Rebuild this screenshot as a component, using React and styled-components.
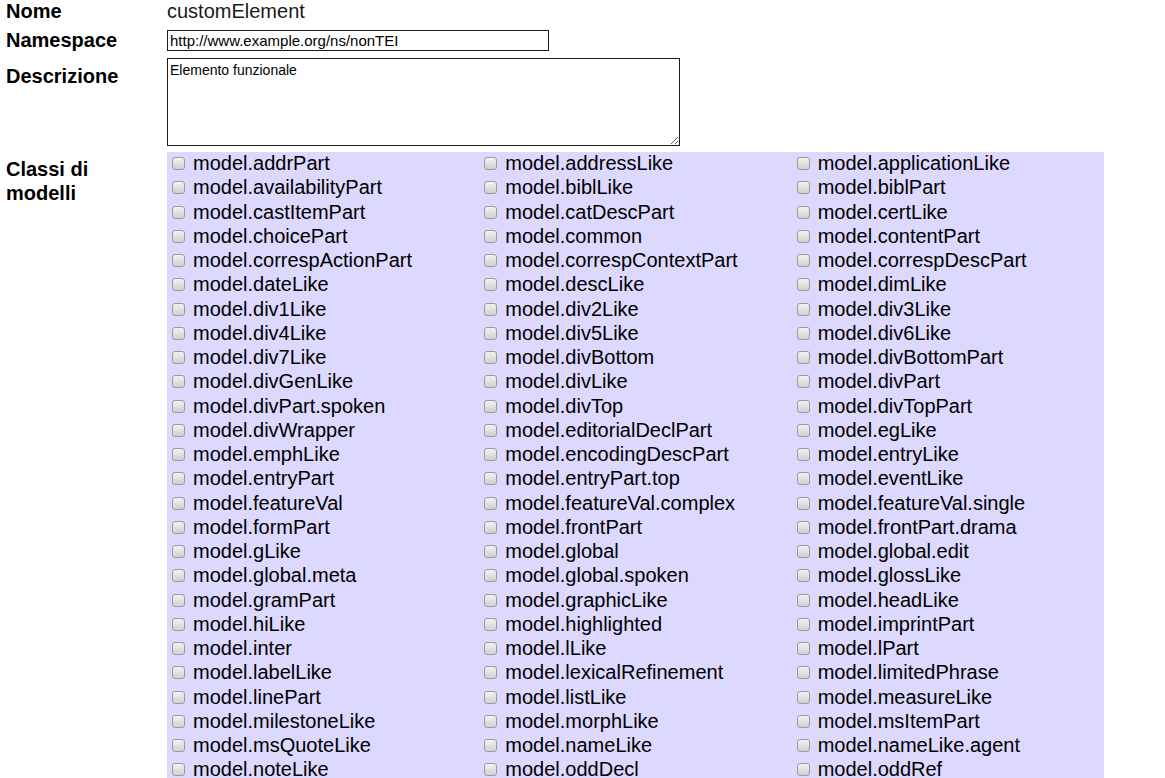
import React from "react";
import styled, { createGlobalStyle } from "styled-components";

const Global = createGlobalStyle`
  html, body { margin: 0; padding: 0; background: #fff; overflow: hidden; }
  body { font-family: "Liberation Sans", Arial, Helvetica, sans-serif; color: #000; }
`;

const Page = styled.div`
  padding: 0 0 0 6px;
  display: flex;
  flex-direction: column;
`;

const Row = styled.div`
  display: grid;
  grid-template-columns: 161px 937px;
  align-items: start;
  margin-bottom: ${(p) => p.$gap}px;
`;

const Label = styled.div`
  font-weight: bold;
  font-size: 20px;
  line-height: 24px;
  padding-right: 24px;
  margin-top: ${(p) => p.$shift}px;
`;

const Value = styled.div`
  font-size: 20px;
  line-height: 24px;
  color: #1a1a1a;
  margin-top: ${(p) => p.$shift}px;
`;

const TextInput = styled.input`
  box-sizing: border-box;
  width: 382px;
  height: 21px;
  margin: 0;
  padding: 0 2px;
  border: 1px solid #1a1a1a;
  font-family: "Liberation Sans", Arial, sans-serif;
  font-size: 15px;
  color: #000;
  background: #fff;
  outline: none;
`;

const TextArea = styled.textarea`
  box-sizing: border-box;
  width: 513px;
  height: 88px;
  margin: 0;
  padding: 4px 2px 0 2px;
  border: 1px solid #1a1a1a;
  font-family: "Liberation Sans", Arial, sans-serif;
  font-size: 14px;
  line-height: 14px;
  color: #000;
  background: #fff;
  display: block;
  outline: none;
  resize: both;
`;

const ClassGrid = styled.div`
  display: grid;
  grid-template-columns: repeat(3, 1fr);
  grid-auto-rows: 24.25px;
  background: #dcd8fe;
  width: 937px;
`;

const Item = styled.label`
  display: flex;
  align-items: flex-start;
  gap: 8px;
  padding-left: 5px;
  font-size: 20px;
  line-height: 22px;
  white-space: nowrap;
`;

const Check = styled.input`
  appearance: none;
  -webkit-appearance: none;
  box-sizing: border-box;
  width: 13px;
  height: 13px;
  margin: 5px 0 0 0;
  border: 1px solid #9a9a9a;
  border-radius: 3px;
  background: linear-gradient(#f2f2f2, #d0d0d0);
  flex: none;
`;

const ItemText = styled.span`
  color: #000;
`;

const classes = [
  "model.addrPart", "model.addressLike", "model.applicationLike",
  "model.availabilityPart", "model.biblLike", "model.biblPart",
  "model.castItemPart", "model.catDescPart", "model.certLike",
  "model.choicePart", "model.common", "model.contentPart",
  "model.correspActionPart", "model.correspContextPart", "model.correspDescPart",
  "model.dateLike", "model.descLike", "model.dimLike",
  "model.div1Like", "model.div2Like", "model.div3Like",
  "model.div4Like", "model.div5Like", "model.div6Like",
  "model.div7Like", "model.divBottom", "model.divBottomPart",
  "model.divGenLike", "model.divLike", "model.divPart",
  "model.divPart.spoken", "model.divTop", "model.divTopPart",
  "model.divWrapper", "model.editorialDeclPart", "model.egLike",
  "model.emphLike", "model.encodingDescPart", "model.entryLike",
  "model.entryPart", "model.entryPart.top", "model.eventLike",
  "model.featureVal", "model.featureVal.complex", "model.featureVal.single",
  "model.formPart", "model.frontPart", "model.frontPart.drama",
  "model.gLike", "model.global", "model.global.edit",
  "model.global.meta", "model.global.spoken", "model.glossLike",
  "model.gramPart", "model.graphicLike", "model.headLike",
  "model.hiLike", "model.highlighted", "model.imprintPart",
  "model.inter", "model.lLike", "model.lPart",
  "model.labelLike", "model.lexicalRefinement", "model.limitedPhrase",
  "model.linePart", "model.listLike", "model.measureLike",
  "model.milestoneLike", "model.morphLike", "model.msItemPart",
  "model.msQuoteLike", "model.nameLike", "model.nameLike.agent",
  "model.noteLike", "model.oddDecl", "model.oddRef",
  "model.orgPart", "model.orthLike", "model.pLike",
  "model.pLike.front", "model.pPart.data", "model.pPart.edit",
];

export default function App() {
  return (
    <>
      <Global />
      <Page>
        <Row $gap={7}>
          <Label $shift={-1}>Nome</Label>
          <Value $shift={-1}>customElement</Value>
        </Row>
        <Row $gap={6}>
          <Label $shift={-2}>Namespace</Label>
          <div>
            <TextInput defaultValue="http://www.example.org/ns/nonTEI" />
          </div>
        </Row>
        <Row $gap={6}>
          <Label $shift={6}>Descrizione</Label>
          <div>
            <TextArea defaultValue="Elemento funzionale" />
          </div>
        </Row>
        <Row $gap={0}>
          <Label $shift={5}>Classi di modelli</Label>
          <ClassGrid>
            {classes.map((c) => (
              <Item key={c}>
                <Check type="checkbox" />
                <ItemText>{c}</ItemText>
              </Item>
            ))}
          </ClassGrid>
        </Row>
      </Page>
    </>
  );
}
